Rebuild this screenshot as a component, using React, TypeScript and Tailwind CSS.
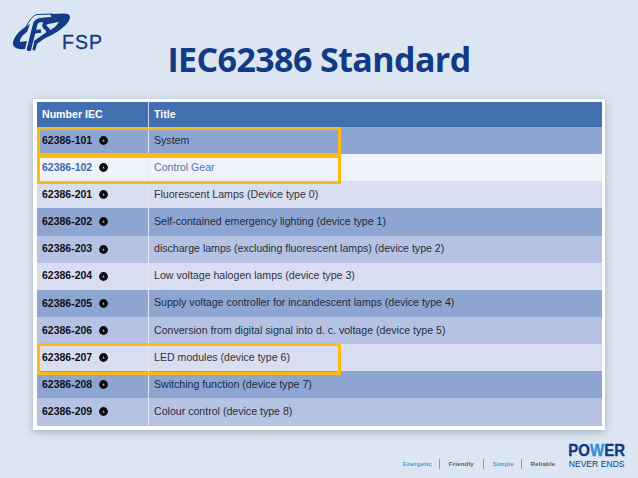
import React from 'react';

const rows = [
  { id: '62386-101', title: 'System', bg: 'bg-[#8ea5d2]', text: 'text-[#222a3a]' },
  { id: '62386-102', title: 'Control Gear', bg: 'bg-[#eff3f9]', text: 'text-[#5274ab]', link: true },
  { id: '62386-201', title: 'Fluorescent Lamps (Device type 0)', bg: 'bg-[#d9ddf0]', text: 'text-[#30343e]' },
  { id: '62386-202', title: 'Self-contained emergency lighting (device type 1)', bg: 'bg-[#8ea5d2]', text: 'text-[#222a3a]' },
  { id: '62386-203', title: 'discharge lamps (excluding fluorescent lamps) (device type 2)', bg: 'bg-[#b6c2e3]', text: 'text-[#282e40]' },
  { id: '62386-204', title: 'Low voltage halogen lamps (device type 3)', bg: 'bg-[#d9ddf0]', text: 'text-[#30343e]' },
  { id: '62386-205', title: 'Supply voltage controller for incandescent lamps (device type 4)', bg: 'bg-[#8ea5d2]', text: 'text-[#222a3a]' },
  { id: '62386-206', title: 'Conversion from digital signal into d. c. voltage (device type 5)', bg: 'bg-[#b6c2e3]', text: 'text-[#282e40]' },
  { id: '62386-207', title: 'LED modules (device type 6)', bg: 'bg-[#d9ddf0]', text: 'text-[#30343e]' },
  { id: '62386-208', title: 'Switching function (device type 7)', bg: 'bg-[#8ea5d2]', text: 'text-[#222a3a]' },
  { id: '62386-209', title: 'Colour control (device type 8)', bg: 'bg-[#b6c2e3]', text: 'text-[#282e40]' },
];

const InfoDot = () => (
  <svg width="9" height="9" viewBox="0 0 9 9" className="shrink-0">
    <circle cx="4.5" cy="4.5" r="4.4" fill="#0c0c10" />
    <path d="M3.3 5.6h2.4L4.5 3.2z" fill="#b8bcc8" />
  </svg>
);

const Logo = () => (
  <div className="flex items-end">
    <svg width="60" height="39" viewBox="0 0 60 39" fill="none">
      {/* left lobe */}
      <path d="M1 30C3 23 9 17 18 12L15 20C10 23 8 27 8 30L15 29L13 37C7 38 0 36 1 30Z" fill="#123a85" />
      {/* right lobe */}
      <path d="M38 2L52 1.5C58 1.5 59.5 5 56.5 9.5C52 16 43 22 33 26L35 20C41 17 46 13 47 9C47 7 44 6 40 6Z" fill="#123a85" />
      {/* thin outline arc */}
      <path d="M14 15C17 9 20 4 25 2.5L40 2" stroke="#123a85" strokeWidth="1" />
      {/* F */}
      <path d="M17 37L23 13C24 9 26 8 30 8L41 7" stroke="#123a85" strokeWidth="4.5" strokeLinecap="round" />
      <path d="M21 20L29 19" stroke="#123a85" strokeWidth="3.5" />
      {/* S */}
      <path d="M46 8L36 10C32 11 31 14 34 16C37 18 37 21 34 23L24 30" stroke="#123a85" strokeWidth="4" strokeLinecap="round" />
      <path d="M22 37L24 30" stroke="#123a85" strokeWidth="3" strokeLinecap="round" />
    </svg>
    <span className="-ml-[10px] mb-[-1px] text-[19.5px] leading-[20px] tracking-[1px] text-[#123a85] [-webkit-text-stroke:0.3px_#123a85]">
      FSP
    </span>
  </div>
);

export default function App() {
  return (
    <div className="flex h-[478px] w-[638px] flex-col overflow-hidden bg-[#dce6f2] font-['Liberation_Sans',sans-serif]">
      <header className="grid h-[99px] grid-cols-[1fr_auto_1fr]">
        <div className="pt-[12px] pl-[12px]">
          <Logo />
        </div>
        <h1 className="pt-[36px] font-['Open_Sans',sans-serif] text-[34px] leading-[46px] font-bold tracking-[-0.6px] text-[#123a85]">
          IEC62386 Standard
        </h1>
        <div />
      </header>

      {/* table card */}
      <div className="mx-[33px] h-[331px] bg-white pt-[3px] pr-[3px] pl-[4px] shadow-[0_2px_8px_rgba(90,110,140,0.45)]">
        <div className="relative">
          <div className="grid h-[25px] grid-cols-[112px_1fr] bg-[#426fb0] text-[10.6px] font-bold text-white">
            <div className="flex items-center border-r border-[#c8d4e8] pl-[5px]">Number IEC</div>
            <div className="flex items-center pl-[5px]">Title</div>
          </div>
          {rows.map(row => (
            <div key={row.id} className={`grid h-[27.15px] grid-cols-[112px_1fr] text-[10.6px] ${row.bg} ${row.text}`}>
              <div className="flex items-center gap-[7px] border-r border-[#e4e9f4] pl-[5px]">
                <span className={row.link ? 'text-[10.5px] font-bold text-[#3f68a8]' : 'text-[10.5px] font-bold text-[#0e1016]'}>{row.id}</span>
                <InfoDot />
              </div>
              <div className="flex items-center pl-[5px]">{row.title}</div>
            </div>
          ))}

          {/* highlight boxes */}
          <div className="absolute top-[25px] left-0 h-[29px] w-[304px] border-[3px] border-[#fcbb14]" />
          <div className="absolute top-[53px] left-0 h-[29px] w-[304px] border-[3px] border-[#fcbb14]" />
          <div className="absolute top-[241px] left-0 h-[32px] w-[304px] border-[3px] border-[#fcbb14]" />
        </div>
      </div>

      <footer className="flex flex-1 items-end justify-end pr-[13px] pb-[9px]">
        <div className="flex h-[10px] items-center text-[6px] font-bold tracking-[0.2px]">
          <span className="text-[#3c9fd6]">Energetic</span>
          <span className="mr-[9px] ml-[7px] h-[10px] w-px bg-[#8d99a8]" />
          <span className="text-[#55595f]">Friendly</span>
          <span className="mx-[9px] h-[10px] w-px bg-[#8d99a8]" />
          <span className="text-[#3c9fd6]">Simple</span>
          <span className="mr-[9px] ml-[7px] h-[10px] w-px bg-[#8d99a8]" />
          <span className="text-[#55595f]">Reliable</span>
        </div>
        <div className="ml-[13px] flex flex-col items-center">
          <div className="origin-bottom scale-y-[1.15] text-[15px] leading-[15px] font-bold text-[#123a85] [-webkit-text-stroke:0.3px_#123a85]">
            PO<span className="text-[#2f8fd0] [-webkit-text-stroke:0.3px_#2f8fd0]">W</span>ER
          </div>
          <div className="mt-[2px] text-[8.6px] leading-[9px] text-[#123a85]">NEVER ENDS</div>
        </div>
      </footer>
    </div>
  );
}
